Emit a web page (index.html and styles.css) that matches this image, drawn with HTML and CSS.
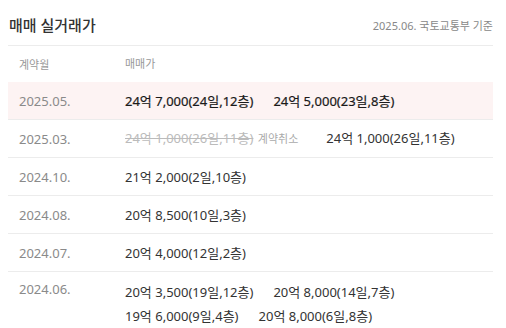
FILE: index.html
```html
<!DOCTYPE html>
<html lang="ko">
<head>
<meta charset="utf-8">
<link rel="stylesheet" href="styles.css">
</head>
<body>
<section class="panel">
  <header class="head">
    <h2 class="title">매매 실거래가</h2>
    <span class="source">2025.06. 국토교통부 기준</span>
  </header>
  <div class="row row-head">
    <div class="col-date">계약월</div>
    <div class="col-price">매매가</div>
  </div>
  <div class="row row-hl">
    <div class="col-date">2025.05.</div>
    <div class="col-price">
      <span class="deal strong">24억 7,000(24일,12층)</span>
      <span class="deal strong">24억 5,000(23일,8층)</span>
    </div>
  </div>
  <div class="row">
    <div class="col-date">2025.03.</div>
    <div class="col-price">
      <span class="deal cancelled"><s>24억 1,000(26일,11층)</s> <span class="cancel-tag">계약취소</span></span>
      <span class="deal">24억 1,000(26일,11층)</span>
    </div>
  </div>
  <div class="row">
    <div class="col-date">2024.10.</div>
    <div class="col-price"><span class="deal">21억 2,000(2일,10층)</span></div>
  </div>
  <div class="row">
    <div class="col-date">2024.08.</div>
    <div class="col-price"><span class="deal">20억 8,500(10일,3층)</span></div>
  </div>
  <div class="row">
    <div class="col-date">2024.07.</div>
    <div class="col-price"><span class="deal">20억 4,000(12일,2층)</span></div>
  </div>
  <div class="row row-multi">
    <div class="col-date">2024.06.</div>
    <div class="col-price">
      <span class="deal">20억 3,500(19일,12층)</span>
      <span class="deal">20억 8,000(14일,7층)</span>
      <span class="deal">19억 6,000(9일,4층)</span>
      <span class="deal">20억 8,000(6일,8층)</span>
    </div>
  </div>
</section>
</body>
</html>
```
FILE: styles.css
```css
* { box-sizing: border-box; }
html, body { margin: 0; padding: 0; background: #fff; }
body {
  font-family: "Noto Sans", "Noto Sans CJK KR", sans-serif;
  color: #333;
}
.panel {
  width: 485px;
  margin-left: 8px;
}
.head {
  display: flex;
  align-items: flex-end;
  justify-content: space-between;
  height: 46px;
  padding-bottom: 10px;
  border-bottom: 1px solid #ececec;
}
.title {
  margin: 0;
  font-size: 15px;
  font-weight: 500;
  color: #333;
  line-height: 20px;
  padding-left: 1px;
}
.source {
  font-size: 11px;
  color: #888;
  line-height: 16px;
  padding-bottom: 1px;
}
.row {
  display: flex;
  align-items: center;
  min-height: 38px;
  border-bottom: 1px solid #ececec;
}
.row-head {
  height: 36px;
  min-height: 36px;
  border-bottom: none;
}
.row-head .col-date, .row-head .col-price {
  font-size: 11px;
  color: #999;
}
.row-hl { background: #fdf3f3; }
.col-date {
  width: 117px;
  padding-left: 11px;
  flex: none;
  font-size: 13px;
  color: #8a8a8a;
}
.col-price {
  flex: 1;
  display: flex;
  flex-wrap: wrap;
  column-gap: 20px;
  font-size: 13px;
  line-height: 24px;
}
.deal { white-space: nowrap; color: #333; }
.strong { font-weight: 400; color: #1a1a1a; -webkit-text-stroke: 0.2px #1a1a1a; }
.cancelled s { color: #bbb; }
.cancel-tag { font-size: 11px; color: #aaa; margin-left: 1px; margin-right: 8px; }
.row-multi {
  align-items: flex-start;
  padding-top: 8px;
  padding-bottom: 7px;
  border-bottom: none;
}
```
